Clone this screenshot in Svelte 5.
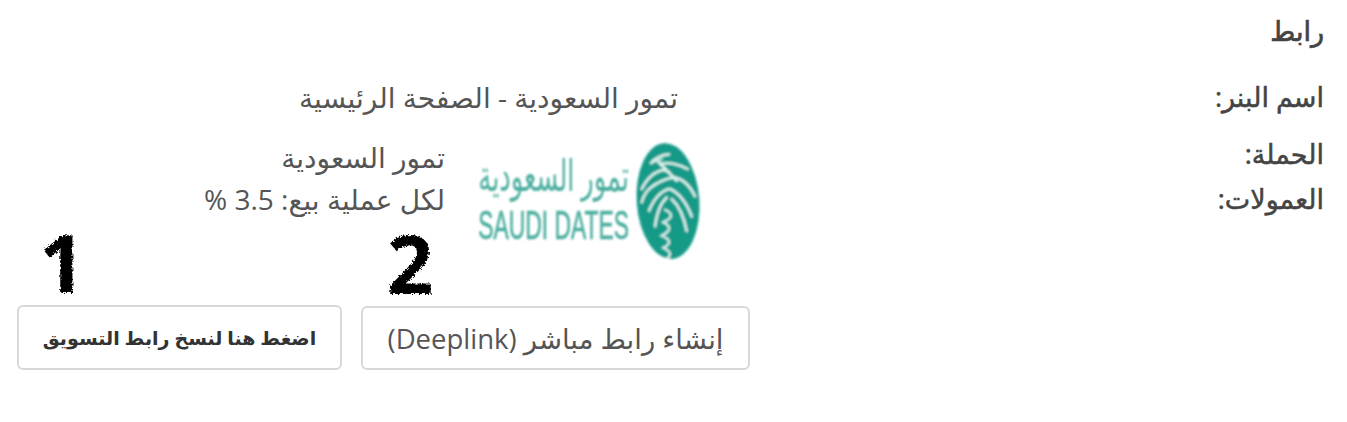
<script>
  let details = [
    { label: 'اسم البنر:', cls: 'l-name' },
    { label: 'الحملة:', cls: 'l-campaign' },
    { label: 'العمولات:', cls: 'l-commission' }
  ];
</script>

<main class="page" dir="rtl">
  <svg class="defs" width="0" height="0" aria-hidden="true">
    <filter id="rough">
      <feTurbulence type="fractalNoise" baseFrequency="0.45" numOctaves="2" seed="4" />
      <feDisplacementMap in="SourceGraphic" scale="5" />
    </filter>
  </svg>
  <h2>رابط</h2>
  <div class="details">
    <div class="labels">
      {#each details as d}
        <div class="label {d.cls}">{d.label}</div>
      {/each}
    </div>
    <div class="content">
      <div class="banner-name">تمور السعودية - الصفحة الرئيسية</div>
      <div class="campaign">
        <svg class="logo" viewBox="54 40 669 351" aria-label="Saudi Dates">
          <g filter="url(#soft)">
            <ellipse cx="627" cy="214" rx="94" ry="174" transform="rotate(-4 627 214)" fill="#179a88" />
            <g transform="translate(518 28)" fill="none" stroke="#e2f3f0" stroke-width="8" stroke-linecap="round">
              <path d="M58 72 Q80 48 112 46" />
              <path d="M62 70 Q78 66 92 60" stroke-width="5" />
              <path d="M85 75 Q122 66 168 90" />
              <path d="M80 68 L135 125" />
              <path d="M30 150 Q50 108 85 95 Q100 90 112 100" />
              <path d="M125 115 Q165 120 190 172" />
              <path d="M125 115 Q85 122 52 150 Q36 166 30 190" />
              <path d="M112 150 Q75 160 52 215" />
              <path d="M115 150 Q155 168 180 232" />
              <path d="M105 175 Q78 200 70 262" />
              <path d="M120 180 Q152 210 165 276" />
              <path d="M100 212 Q138 230 95 250 Q132 268 90 290 Q132 308 95 326 Q128 342 106 358" stroke-width="7" />
            </g>
            <text class="logo-ar" x="510" y="185" textLength="452" lengthAdjust="spacingAndGlyphs">تمور السعودية</text>
            <text class="logo-en" x="58" y="328" textLength="452" lengthAdjust="spacingAndGlyphs" direction="ltr">SAUDI DATES</text>
          </g>
          <defs>
            <filter id="soft"><feGaussianBlur stdDeviation="2.5" /></filter>
          </defs>
        </svg>
        <div class="terms">
          <div>تمور السعودية</div>
          <div>لكل عملية بيع: 3.5 %</div>
        </div>
      </div>
      <div class="actions">
        <button class="deeplink"><span class="mark">2</span>إنشاء رابط مباشر (Deeplink)</button>
        <button class="copy"><span class="mark">1</span>اضغط هنا لنسخ رابط التسويق</button>
      </div>
    </div>
  </div>
</main>

<style>
  :global(body) {
    margin: 0;
    background: #fff;
  }

  .page {
    height: 422px;
    box-sizing: border-box;
    padding: 12px 23px 0 17px;
    font-family: "Open Sans", "DejaVu Sans", sans-serif;
    color: #555;
    overflow: hidden;
  }

  .defs {
    position: absolute;
  }

  h2 {
    margin: 0;
    font-size: 27px;
    line-height: 38px;
    font-weight: 400;
    -webkit-text-stroke: 0.7px #444;
    color: #444;
  }

  .details {
    display: flex;
    justify-content: space-between;
    margin-top: 30px;
  }

  .labels {
    font-size: 27px;
    -webkit-text-stroke: 0.5px #444;
    color: #444;
  }

  .label {
    line-height: 34px;
  }

  .l-campaign {
    margin-top: 23px;
  }

  .l-commission {
    margin-top: 11px;
  }

  .content {
    width: 733px;
  }

  .banner-name {
    font-size: 28px;
    line-height: 34px;
    padding-right: 72px;
  }

  .campaign {
    display: flex;
    align-items: flex-start;
    margin-top: 29px;
    padding-right: 50px;
  }

  .logo {
    width: 223px;
    height: 117px;
    flex: none;
    overflow: visible;
  }

  .logo-ar {
    font-size: 130px;
    fill: #4cae9f;
  }

  .logo-en {
    font-family: "Liberation Sans", sans-serif;
    font-size: 122px;
    fill: #4cae9f;
    stroke: #4cae9f;
    stroke-width: 2px;
  }

  .terms {
    margin-top: -7px;
    margin-right: 32px;
    font-size: 28px;
    line-height: 42px;
  }

  .actions {
    display: flex;
    justify-content: space-between;
    align-items: flex-end;
    gap: 19px;
    margin-top: 45px;
  }

  button {
    position: relative;
    height: 64px;
    background: #fff;
    border: 2px solid #d8d8d8;
    border-radius: 6px;
    font-family: inherit;
    color: #555;
    padding: 0;
  }

  .deeplink {
    width: 389px;
    font-size: 27.5px;
  }

  .copy {
    width: 325px;
    height: 65px;
    font-size: 19px;
    font-weight: 700;
    color: #333;
  }

  .mark {
    position: absolute;
    bottom: 100%;
    margin-bottom: 15px;
    font-family: "Open Sans", sans-serif;
    font-size: 81px;
    line-height: 60px;
    font-weight: 700;
    color: #000;
    filter: url(#rough);
  }

  .deeplink .mark {
    left: 24px;
  }

  .copy .mark {
    left: 20px;
  }
</style>
